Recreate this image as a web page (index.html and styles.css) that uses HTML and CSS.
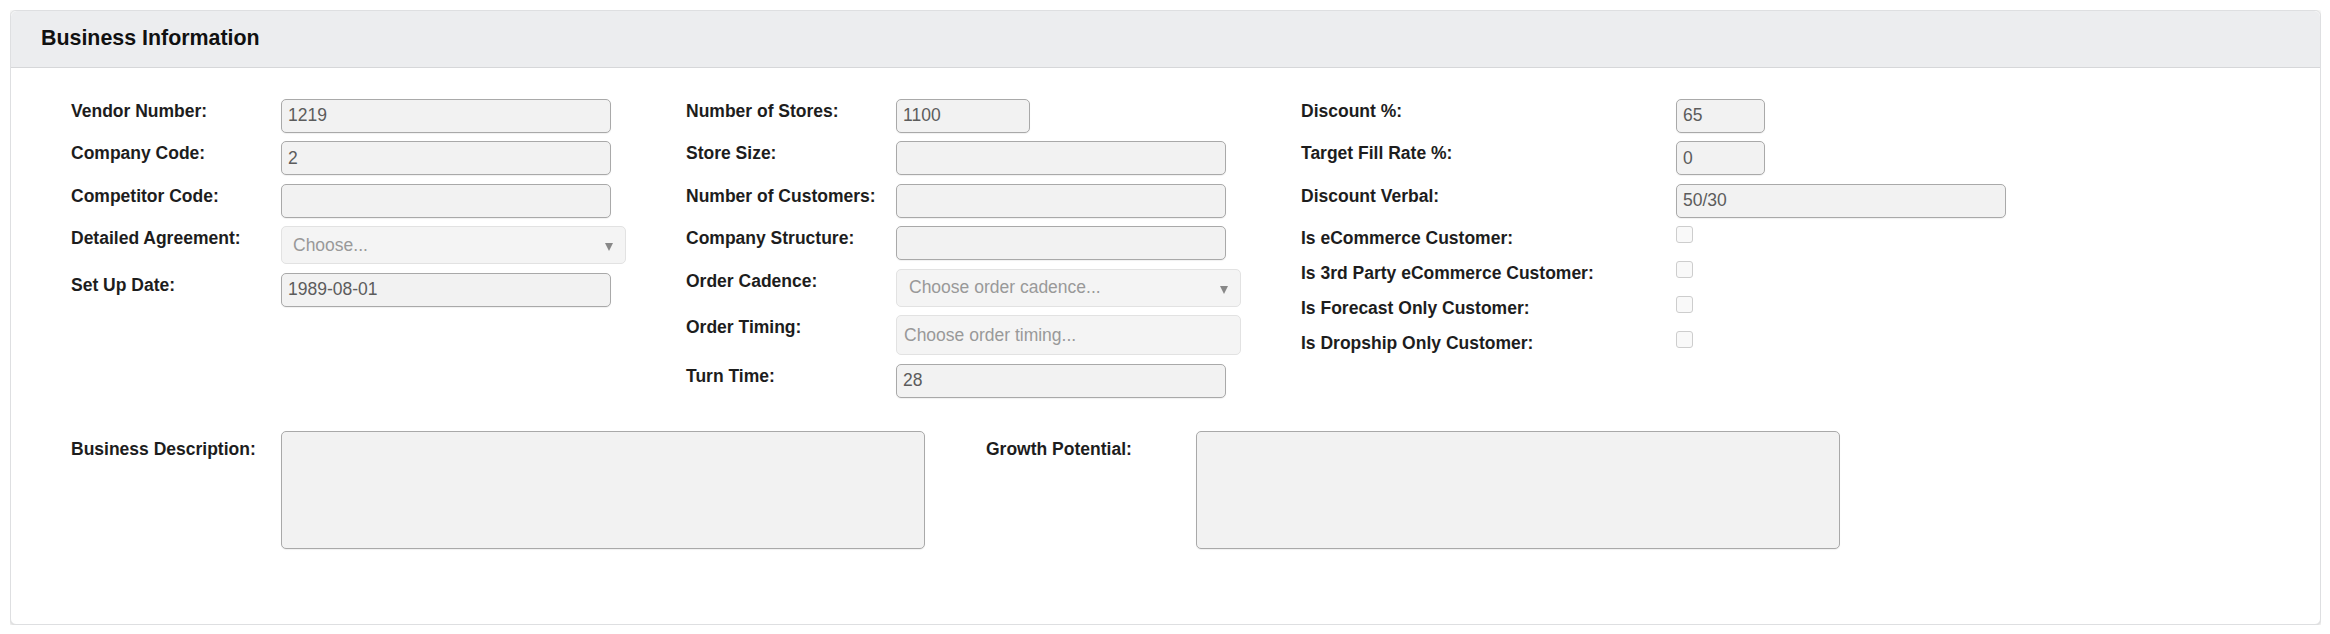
FILE: index.html
```html
<!DOCTYPE html>
<html lang="en">
<head>
    <meta charset="UTF-8">
    <meta name="viewport" content="width=device-width, initial-scale=1.0">
    <title>Business Information</title>
    <link rel="stylesheet" href="styles.css">
</head>
<body>
    <div class="card">
        <div class="card-header">
            <h2 class="card-title">Business Information</h2>
        </div>

        <div class="card-body">
            <div class="field-columns">
                <!-- Column 1 -->
                <div class="field-col">
                    <div class="field-row">
                        <label class="field-label">Vendor Number:</label>
                        <input class="field-input" type="text" value="1219" readonly>
                    </div>
                    <div class="field-row">
                        <label class="field-label">Company Code:</label>
                        <input class="field-input" type="text" value="2" readonly>
                    </div>
                    <div class="field-row">
                        <label class="field-label">Competitor Code:</label>
                        <input class="field-input" type="text" value="" readonly>
                    </div>
                    <div class="field-row">
                        <label class="field-label">Detailed Agreement:</label>
                        <div class="select-box">Choose...</div>
                    </div>
                    <div class="field-row">
                        <label class="field-label">Set Up Date:</label>
                        <input class="field-input" type="text" value="1989-08-01" readonly>
                    </div>
                </div>

                <!-- Column 2 -->
                <div class="field-col">
                    <div class="field-row">
                        <label class="field-label">Number of Stores:</label>
                        <input class="field-input input-short" type="text" value="1100" readonly>
                    </div>
                    <div class="field-row">
                        <label class="field-label">Store Size:</label>
                        <input class="field-input" type="text" value="" readonly>
                    </div>
                    <div class="field-row">
                        <label class="field-label">Number of Customers:</label>
                        <input class="field-input" type="text" value="" readonly>
                    </div>
                    <div class="field-row">
                        <label class="field-label">Company Structure:</label>
                        <input class="field-input" type="text" value="" readonly>
                    </div>
                    <div class="field-row">
                        <label class="field-label">Order Cadence:</label>
                        <div class="select-box select-cadence">Choose order cadence...</div>
                    </div>
                    <div class="field-row">
                        <label class="field-label">Order Timing:</label>
                        <div class="multi-box">Choose order timing...</div>
                    </div>
                    <div class="field-row">
                        <label class="field-label">Turn Time:</label>
                        <input class="field-input" type="text" value="28" readonly>
                    </div>
                </div>

                <!-- Column 3 -->
                <div class="field-col col-wide-label">
                    <div class="field-row">
                        <label class="field-label">Discount %:</label>
                        <input class="field-input input-tiny" type="text" value="65" readonly>
                    </div>
                    <div class="field-row">
                        <label class="field-label">Target Fill Rate %:</label>
                        <input class="field-input input-tiny" type="text" value="0" readonly>
                    </div>
                    <div class="field-row">
                        <label class="field-label">Discount Verbal:</label>
                        <input class="field-input" type="text" value="50/30" readonly>
                    </div>
                    <div class="check-row">
                        <label class="field-label">Is eCommerce Customer:</label>
                        <input class="field-check" type="checkbox" disabled>
                    </div>
                    <div class="check-row">
                        <label class="field-label">Is 3rd Party eCommerce Customer:</label>
                        <input class="field-check" type="checkbox" disabled>
                    </div>
                    <div class="check-row">
                        <label class="field-label">Is Forecast Only Customer:</label>
                        <input class="field-check" type="checkbox" disabled>
                    </div>
                    <div class="check-row">
                        <label class="field-label">Is Dropship Only Customer:</label>
                        <input class="field-check" type="checkbox" disabled>
                    </div>
                </div>
            </div>

            <!-- Descriptions -->
            <div class="text-columns">
                <div class="text-field">
                    <label class="field-label text-label">Business Description:</label>
                    <textarea class="field-text" readonly></textarea>
                </div>
                <div class="text-field">
                    <label class="field-label text-label">Growth Potential:</label>
                    <textarea class="field-text" readonly></textarea>
                </div>
            </div>
        </div>
    </div>
</body>
</html>
```

FILE: styles.css
```css
body {
    font-family: 'Liberation Sans', Arial, sans-serif;
    font-size: 17.5px;
    color: #1d1d1d;
    background: #ffffff;
    margin: 10px 9px 10px 10px;
}

.card {
    border: 1px solid #dedfe1;
    border-radius: 6px;
    background: #ffffff;
    box-shadow: 0 1px 4px rgba(0, 0, 0, 0.24);
}

.card-header {
    height: 56px;
    display: flex;
    align-items: center;
    padding: 0 30px;
    background: #ecedef;
    border-bottom: 1px solid #d6d7d9;
    border-radius: 6px 6px 0 0;
}

.card-title {
    margin: 0;
    font-size: 21.4px;
    line-height: 1.1;
    font-weight: bold;
    color: #111;
}

.card-body {
    padding: 30.7px 60px 75px 60px;
}

.field-columns {
    display: grid;
    grid-template-columns: 615px 615px auto;
}

.field-row {
    display: flex;
    align-items: flex-start;
    margin-bottom: 8.5px;
}

.check-row {
    display: flex;
    align-items: flex-start;
    height: 35px;
}

.field-label {
    width: 210px;
    flex: none;
    font-weight: bold;
    line-height: 25px;
    color: #1d1d1d;
}

.col-wide-label .field-label {
    width: 375px;
}

.field-input {
    width: 330px;
    height: 34px;
    box-sizing: border-box;
    padding: 0 6px;
    margin: 0;
    font-family: inherit;
    font-size: 17.5px;
    color: #5c5c5c;
    background: #f2f2f2;
    border: 1px solid #a9a9a9;
    border-radius: 5px;
    box-shadow: 0 1px 1px rgba(0, 0, 0, 0.06);
    outline: none;
}

.input-short {
    width: 134px;
}

.input-tiny {
    width: 89px;
}

.select-box,
.multi-box {
    width: 345px;
    box-sizing: border-box;
    display: flex;
    align-items: center;
    color: #999;
    background: #f4f4f4;
    border: 1px solid #e2e2e2;
    border-radius: 5px;
}

.select-box {
    position: relative;
    height: 38px;
    padding: 0 11px;
}

.select-cadence {
    padding: 0 12px;
}

/* dropdown caret */
.select-box::after {
    content: "";
    position: absolute;
    right: 12px;
    top: 16px;
    border-left: 4.5px solid transparent;
    border-right: 4.5px solid transparent;
    border-top: 8px solid #888;
}

.multi-box {
    height: 40px;
    padding: 0 7px;
}

.field-check {
    appearance: none;
    -webkit-appearance: none;
    width: 17px;
    height: 17px;
    margin: 0;
    background: #f9f9f9;
    border: 1px solid #cdcdcd;
    border-radius: 3px;
}

.text-columns {
    display: grid;
    grid-template-columns: 915px 915px;
    margin-top: 25px;
}

.text-field {
    display: flex;
    align-items: flex-start;
}

.text-label {
    padding-top: 6px;
}

.field-text {
    width: 644px;
    height: 118px;
    box-sizing: border-box;
    margin: 0;
    resize: none;
    background: #f2f2f2;
    border: 1px solid #a9a9a9;
    border-radius: 5px;
    box-shadow: 0 1px 1px rgba(0, 0, 0, 0.06);
    outline: none;
}
```
